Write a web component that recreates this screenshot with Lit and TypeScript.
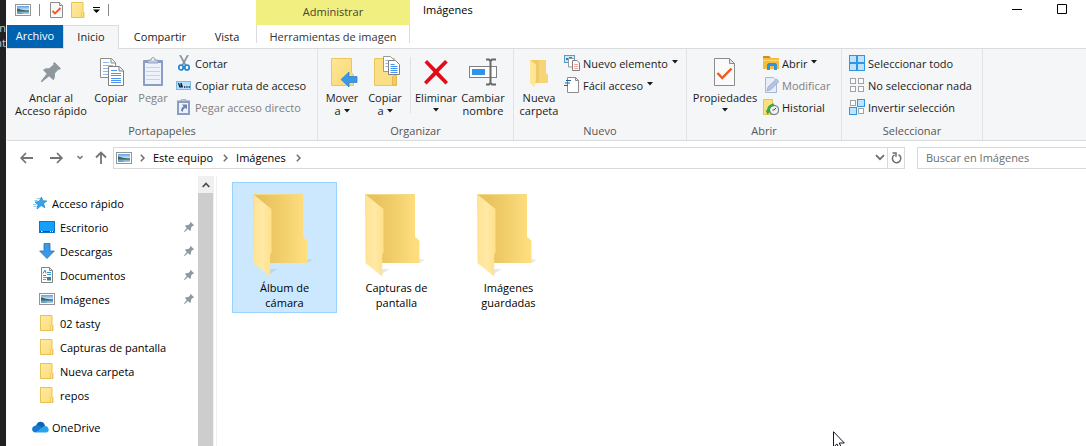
import { LitElement, html, css, svg, nothing, TemplateResult } from "lit";
import { customElement } from "lit/decorators.js";

const caret = html`<svg class="caret" width="6" height="4" viewBox="0 0 6 4"><path d="M0 0h6L3 3.6z" fill="#1b1b1b" /></svg>`;

const pinShape = svg`<path d="M13.500 0L20 6.500l-1.500 1.300-1-.3-3.700 4c.6 2.500.2 4.800-1.500 6.700L8.200 14.200 1 20H0v-1l5.700-7.200L2 8c1.500-1.600 3.800-2.200 6.300-1.700l4.200-3.800-.4-1z" fill="#8d989f"/>`;

const picture = html`<svg width="16" height="12" viewBox="0 0 16 12">
  <defs>
    <linearGradient id="sky" x1="0" y1="0" x2="0" y2="1"><stop offset="0" stop-color="#5f9fe6" /><stop offset="1" stop-color="#eef6fb" /></linearGradient>
  </defs>
  <rect x=".5" y=".5" width="15" height="11" fill="#fff" stroke="#959595" />
  <rect x="2" y="2" width="12" height="5" fill="url(#sky)" />
  <path d="M2 4.500C4 4.500 7 6.500 14 6.300V8H2z" fill="#356a62" />
  <rect x="2" y="7.500" width="12" height="2.500" fill="#6fa3c4" />
  <path d="M6 8.500h8V10H9z" fill="#a5c8de" />
</svg>`;

const smallFolder = html`<svg width="14" height="16" viewBox="0 0 14 16">
  <defs><linearGradient id="sf" x1="0" y1="0" x2="1" y2="1"><stop offset="0" stop-color="#ffeaa3" /><stop offset="1" stop-color="#fcdc78" /></linearGradient></defs>
  <path d="M.5.5h11.500v9l1 1v5H.5z" fill="url(#sf)" stroke="#e9c34f" />
  <path d="M10.500 15.500v-4l1-1.500 1 1v4.500z" fill="#ffe89b" stroke="#e9c34f" stroke-width=".8" />
</svg>`;

const smallPage = html`<svg width="13" height="16" viewBox="0 0 13 16">
  <path d="M.5.5h9l3 3v12H.5z" fill="#fafafa" stroke="#8c8c8c" />
  <path d="M9.500.5v3h3" fill="#e2e2e2" stroke="#8c8c8c" />
  <path d="M2.500 9l2.500 2.500L10.500 6" fill="none" stroke="#f1591f" stroke-width="1.800" />
</svg>`;

const largeIcons: Record<string, TemplateResult> = {
  pin: html`<svg width="32" height="32" viewBox="0 0 32 32"><g transform="translate(6 6)">${pinShape}</g></svg>`,
  copy: html`<svg width="32" height="32" viewBox="0 0 32 32">
    <path d="M5.500 2.500h11l4 4v15h-15z" fill="#fff" stroke="#8c8c8c" />
    <path d="M16 2.500v4.500h4.500" fill="#eee" stroke="#8c8c8c" />
    <path d="M8 6.500h6M8 9.500h10M8 12.500h5M8 15.500h5M8 18.500h5" stroke="#8ab9f3" />
    <path d="M13.500 10.500h11l4 4v15h-15z" fill="#fff" stroke="#808080" />
    <path d="M24 10.500v4.500h4.500" fill="#eee" stroke="#808080" />
    <path d="M16 14.500h6M16 17.500h10M16 19.500h10M16 22.500h10M16 24.500h10M16 26.500h10" stroke="#4a93ee" />
  </svg>`,
  paste: html`<svg width="32" height="32" viewBox="0 0 32 32">
    <rect x="6" y="4" width="20" height="26" rx="1" fill="#8b9dc3" />
    <rect x="8" y="7" width="16" height="21" fill="#eef3fb" />
    <path d="M9 11.500h14M9 15.500h14M9 19.500h14M9 23.500h14" stroke="#c5d2e8" />
    <path d="M11 7V4h3c0-3.400 4-3.400 4 0h3v3z" fill="#c0cbdf" stroke="#8797b7" stroke-width=".8" />
    <circle cx="16" cy="3.500" r="1" fill="#fff" />
  </svg>`,
  move: html`<svg width="32" height="32" viewBox="0 0 32 32">
    <defs><linearGradient id="mf" x1="0" y1="0" x2="1" y2="1"><stop offset="0" stop-color="#ffe799" /><stop offset="1" stop-color="#f8d672" /></linearGradient></defs>
    <path d="M5.500 2.500h20v14l2 2.500v10.500h-22z" fill="url(#mf)" stroke="#eac75d" />
    <path d="M15 23.500l8-7.500v4.500h8v6h-8V31z" fill="#3a98e6" stroke="#2380cf" stroke-width=".7" />
  </svg>`,
  copyTo: html`<svg width="32" height="32" viewBox="0 0 32 32">
    <path d="M5.500 2.500h20v14l2 2.500v10.500h-22z" fill="#fbdf87" stroke="#eac75d" />
    <path d="M23.500 29v-8l2-2 2 2v8z" fill="#f3cd62" stroke="#e2b94a" />
    <path d="M14.500.5h7l3 3v12h-10z" fill="#fff" stroke="#999" />
    <path d="M16.500 4.500h4M16.500 7.500h3M16.500 10.500h3" stroke="#8ab9f3" />
    <path d="M19.500 4.500h7l4 4v10h-11z" fill="#fff" stroke="#808080" />
    <path d="M21.500 8.500h4M21.500 10.500h7M21.500 12.500h7M21.500 14.500h7M21.500 16.500h7" stroke="#4a93ee" />
  </svg>`,
  remove: html`<svg width="32" height="32" viewBox="0 0 32 32"><path d="M4.500 6.500L7 4l9 9 9-9 2.800 2.500-9.300 9.500 9.500 10-2.500 2.500L16 19 6.500 28.500 4 26l9.500-10z" fill="#e30b17" /></svg>`,
  rename: html`<svg width="32" height="32" viewBox="0 0 32 32">
    <rect x="2.500" y="10.500" width="27" height="11" fill="#fff" stroke="#808080" />
    <rect x="5" y="13" width="13" height="6" fill="#2f93ea" />
    <path d="M19 3.500h3l1.500 1.500L25 3.500h4M23.500 4.500v23M19 28.500h3l1.500-1.500 1.500 1.500h4" fill="none" stroke="#686868" stroke-width="2" />
  </svg>`,
  newFolder: html`<svg width="32" height="32" viewBox="0 0 32 32">
    <path d="M7 4h16v13l2 2.500V27H8z" fill="#efca68" /><path d="M16 4h7v13l2 2.500V27h-9z" fill="#f7d577" />
    <path d="M7 4l6 4.500v15L11.500 31 7 27z" fill="#ffe699" />
  </svg>`,
  properties: html`<svg width="32" height="32" viewBox="0 0 32 32"><g transform="translate(5 2)">
    <path d="M.5.5h15l5 5v22H.5z" fill="#fafafa" stroke="#8c8c8c" />
    <path d="M15.500.5v5h5z" fill="#e2e2e2" stroke="#8c8c8c" />
    <path d="M3.500 15l4.700 5L17.500 10.500" fill="none" stroke="#f1591f" stroke-width="2.500" /></g>
  </svg>`,
};

const tileGrid = (on: boolean[]) => html`<svg width="16" height="16" viewBox="0 0 16 16">${on.map((sel, i) => {
  const x = (i % 2) * 8, y = Math.floor(i / 2) * 8;
  return sel
    ? svg`<rect x=${x + 0.5} y=${y + 0.5} width="7" height="7" fill="#bfe3ff" stroke="#2f97e0"/>`
    : svg`<rect x=${x + 1.5} y=${y + 1.5} width="5" height="5" fill="#fff" stroke="#a2a2a2"/>`;
})}</svg>`;

const smallIcons: Record<string, TemplateResult> = {
  cut: html`<svg width="16" height="16" viewBox="0 0 16 16">
    <path d="M4 0l5.500 10M12 0L6.500 10" stroke="#8b95a0" stroke-width="1.700" />
    <ellipse cx="5" cy="12.500" rx="2.200" ry="2.500" fill="none" stroke="#1d86d2" stroke-width="1.700" />
    <ellipse cx="11" cy="12.500" rx="2.200" ry="2.500" fill="none" stroke="#1d86d2" stroke-width="1.700" />
  </svg>`,
  path: html`<svg width="16" height="16" viewBox="0 0 16 16">
    <rect x=".5" y="4.500" width="14" height="8" fill="#b5e0fd" stroke="#80b9df" />
    <path d="M2.500 6l1.500 4.500M5 6l1.500 4.500M5 6v4.500" fill="none" stroke="#123" stroke-width="1.200" />
    <path d="M8 10h1.300M10.300 10h1.300M12.600 10h1.300" stroke="#123" stroke-width="1.300" />
  </svg>`,
  shortcut: html`<svg width="16" height="16" viewBox="0 0 16 16">
    <path d="M1 1.500h13V16H1z" fill="#8b9dc3" /><path d="M3 4h9v10H3z" fill="#eef3fb" />
    <path d="M5 2.500V1l2-1h1l2 1v1.500z" fill="#c0cbdf" stroke="#8797b7" stroke-width=".7" />
    <path d="M6 5.500h5v5L9.300 8.800C7.500 10 7 11 6.800 13L5 11.800C5 9.700 6 8.200 7.600 7.200z" fill="#6e85b3" />
  </svg>`,
  newItem: html`<svg width="16" height="16" viewBox="0 0 16 16">
    <rect x=".5" y=".5" width="10" height="7" fill="#cbeaff" stroke="#4f9fc9" /><path d="M2 3h2v2H2zM5 2h3v2H5z" fill="#377ba8" />
    <path d="M4.500 3.500h5l2 2v6.500h-7z" fill="#fff" stroke="#999" />
    <path d="M8.500 5.500h4.500l2.500 2.500v7.500h-7z" fill="#fff" stroke="#808080" />
    <path d="M10 9.500h4M10 11.500h4M10 13.500h4" stroke="#f2a4a4" />
  </svg>`,
  easy: html`<svg width="16" height="16" viewBox="0 0 16 16">
    <path d="M3.500.5h8l3 3v12h-11z" fill="#fff" stroke="#8c8c8c" /><path d="M11.500.5v3h3" fill="none" stroke="#8c8c8c" />
    <path d="M2 3.500h5M1 6h5M0 8.500h4" stroke="#255f9c" stroke-width="1.200" />
  </svg>`,
  open: html`<svg width="16" height="16" viewBox="0 0 16 16">
    <path d="M0 1h6l2 2h8v11H0z" fill="#f5bd38" /><path d="M0 1h6l2 2H0z" fill="#d68c14" /><path d="M0 5h16v1H0z" fill="#ffd870" />
    <path d="M4 15V9.500L5.500 8h7L14 9.500V15h-3v-4H7v4z" fill="#2c93e3" />
  </svg>`,
  edit: html`<svg width="16" height="16" viewBox="0 0 16 16">
    <path d="M2.500.5h8l3 3v12h-11z" fill="#e8eef8" stroke="#a8b8d5" />
    <path d="M4 14l1-4 8.500-8L16 4.500 8 12.500z" fill="#b6c5df" stroke="#92a5c9" stroke-width=".7" />
  </svg>`,
  history: html`<svg width="16" height="16" viewBox="0 0 16 16">
    <path d="M.5.5h9v6l2 2v7H.5z" fill="#fbe082" stroke="#e9c34f" />
    <circle cx="11" cy="11" r="4.600" fill="#eef1f2" stroke="#777f83" stroke-width="1.200" />
    <path d="M11 11l2-2M11 11H9.500" stroke="#444" />
    <path d="M11 4.500v2.700c-3 0-4.500 2-4.700 4.600L8 12l-3.600 3.400L2.500 11l1.500.5C4 8 6.500 4.800 11 4.500z" fill="#35ad3f" />
  </svg>`,
  all: tileGrid([true, true, true, true]),
  none: tileGrid([false, false, false, false]),
  invert: tileGrid([false, true, true, false]),
};

const navIcons: Record<string, TemplateResult> = {
  desktop: html`<svg width="16" height="12" viewBox="0 0 16 12"><rect x=".5" y=".5" width="15" height="11" fill="#14a0fb" stroke="#1275c0" /><path d="M1 10.500h14" stroke="#0a4d8b" /><path d="M2 10.500h1.500M11 10.500h1M13 10.500h1" stroke="#fff" /></svg>`,
  download: html`<svg width="16" height="16" viewBox="0 0 16 16"><path d="M5 .5h6v7.500h4.300L8 15.500.7 8H5z" fill="#3a98e6" stroke="#2270b8" stroke-width=".8" /></svg>`,
  document: html`<svg width="12" height="16" viewBox="0 0 12 16"><path d="M.5.5h8l3 3v12H.5z" fill="#fff" stroke="#858585" /><path d="M8.500.5v3h3" fill="none" stroke="#858585" /><path d="M2 6.500L4 3l1 3.500M6 5.500h4M2 8.500h3M6 7.500h4" fill="none" stroke="#2b91d3" /><path d="M2 10.500h8M2 12.500h3" stroke="#8d989f" /><path d="M6 10h4v3.500H6z" fill="#3d7c92" /></svg>`,
  picture,
  folder: smallFolder,
  star: html`<svg width="14" height="14" viewBox="0 0 14 14"><path d="M8.500 1l1.300 3.800 4 .1-3.200 2.500 1.200 4.400L8.200 9.500 4 13l1-4.600-3-2.300 4.200-.7z" fill="#36a5ee" stroke="#1b7fc4" stroke-width=".7" /><path d="M4 2.500h3M0 8.500h3.500M.5 10.500h3M1.500 4.500h3" stroke="#6bbcea" stroke-width=".8" /></svg>`,
  cloud: html`<svg width="17" height="12" viewBox="0 0 17 12"><path d="M4 5C5-.5 12-.8 13 5l-4 3-5-3z" fill="#0f63b4" /><path d="M4 4.500c2-1 4 .3 9 4L3 11.500C-1 11-1 5 4 4.500z" fill="#1478d4" /><path d="M3.500 11.600L12 5c5-1 6.500 6 2 6.600z" fill="#29a3ea" /></svg>`,
};

const places: [string, string, boolean][] = [
  ["Escritorio", "desktop", true], ["Descargas", "download", true], ["Documentos", "document", true], ["Imágenes", "picture", true],
  ["02 tasty", "folder", false], ["Capturas de pantalla", "folder", false], ["Nueva carpeta", "folder", false], ["repos", "folder", false],
];

@customElement("app-root")
export class AppRoot extends LitElement {
  static styles = css`
    :host { display: flex; height: 100vh; overflow: hidden; background: #fff; color: #1b1b1b; font: 11px/13px "Open Sans", "Noto Sans", sans-serif; }
    * { box-sizing: border-box; }
    svg { display: block; flex: none; }
    button, input { font: inherit; color: inherit; border: 0; background: none; padding: 0; margin: 0; }
    a { color: inherit; text-decoration: none; }
    .behind { width: 6px; flex: none; overflow: hidden; background: #212121; color: #c8c8c8; padding-top: 20px; line-height: 15px; display: flex; flex-direction: column; align-items: flex-end; }
    .window { flex: 1; min-width: 0; display: flex; flex-direction: column; border-left: 1px solid #fafafa; }
    .top { display: flex; height: 48px; }
    .quick { display: flex; align-items: center; height: 25px; padding: 0 0 6px 8px; }
    .quick button { margin-right: 8px; }
    .rule { width: 1px; height: 12px; background: #8a8a8a; margin-right: 10px; }
    .tabs { display: flex; height: 24px; position: relative; }
    .tab { padding: 0 0 2px; height: 24px; border: 1px solid transparent; border-bottom: 0; }
    .file { background: #0063b1; color: #fff; border: 0; height: 23px; width: 56px; white-space: nowrap; }
    .active { background: #f5f6f7; border-color: #dadbdc; width: 56px; }
    .share { width: 82px; }
    .view { width: 52px; }
    .context { width: 154px; margin-left: 3px; text-align: center; }
    .manage { background: #f1ef7f; height: 25px; line-height: 24px; color: #45452f; }
    .tools { width: 100%; height: 18px; line-height: 24px; border: solid #dadbdc; border-width: 0 1px; color: #333; }
    .title { padding: 3px 13px; flex: 1; color: #000; }
    .caption { display: flex; gap: 35px; padding: 4px 19px 0 0; align-items: flex-start; }
    .ribbon { display: flex; height: 93px; background: #f5f6f7; border: solid #dadbdc; border-width: 1px 0; }
    .group { display: flex; flex-direction: column; justify-content: space-between; padding: 3px 0; border-right: 1px solid #e2e3e4; }
    .g1 { width: 311px; } .g2 { width: 196px; } .g3 { width: 173px; } .g4 { width: 155px; } .g5 { width: 141px; }
    .controls { display: flex; }
    .g1 .controls { padding-left: 3px; }
    .g5 .controls { padding-left: 7px; }
    .label { text-align: center; color: #555; line-height: 13px; }
    .large { display: flex; flex-direction: column; align-items: center; padding-top: 4px; white-space: nowrap; flex: none; }
    .large svg { margin-bottom: 3px; }
    .large .caret, .small .caret { display: inline-block; margin: 0 0 2px 3px; }
    .w38 { width: 38px; } .w46 { width: 46px; } .w48 { width: 48px; } .w50 { width: 50px; } .w76 { width: 76px; } .w82 { width: 82px; }
    .bar { width: 1px; height: 56px; background: #dfe0e1; margin: 5px 2px 0 6px; }
    .stack { display: flex; flex-direction: column; }
    .small { display: flex; align-items: center; gap: 3px; height: 22px; white-space: nowrap; }
    .small .caret { margin: 0 0 2px 1px; }
    .dim { color: #808080; }
    .address { display: flex; align-items: center; height: 35px; padding: 0 0 2px 13px; }
    .nav { display: flex; align-items: center; gap: 12px; margin-right: 6px; }
    .location { flex: 1; display: flex; align-items: center; height: 22px; border: 1px solid #d9d9d9; padding-left: 2px; gap: 8px; color: #000; margin-right: 12px; }
    .crumb { margin-right: 2px; }
    .fill { flex: 1; }
    .refresh { border-left: 1px solid #d9d9d9; height: 20px; width: 17px; display: grid; place-items: center; margin-left: -6px; }
    .search { width: 169px; height: 22px; border: 1px solid #d9d9d9; border-right: 0; padding-left: 8px; border-radius: 0; outline: 0; }
    .search::placeholder { color: #6d6d6d; opacity: 1; }
    .body { flex: 1; min-height: 0; display: flex; color: #000; }
    .tree { width: 191px; padding: 15px 4px 0 24px; flex: none; overflow: hidden; }
    .tree a { display: flex; align-items: center; height: 24px; white-space: nowrap; }
    .tree .icon { width: 24px; display: grid; place-items: center; flex: none; }
    .tree .place { padding-left: 4px; }
    .tree .place .icon { margin-right: 1px; }
    .tree .icon.head { width: 18px; margin-right: 3px; }
    .tree .cloud { margin-top: 8px; }
    .tree .fixed { margin-left: auto; }
    .scroll { width: 16px; background: #f0f0f0; display: flex; flex-direction: column; flex: none; }
    .scroll button { height: 17px; display: grid; place-items: center; }
    .thumb { flex: 1; background: #cdcdcd; margin-right: 1px; }
    .split { width: 1px; background: #f0f0f0; margin: 0 15px 0 2px; flex: none; }
    .files { display: flex; flex-wrap: wrap; align-content: flex-start; gap: 7px; padding-top: 6px; flex: 1; }
    .tile { width: 105px; min-height: 131px; border: 1px solid transparent; padding: 11px 12px 0; display: flex; flex-direction: column; align-items: center; line-height: 15px; }
    .tile svg { margin-bottom: 2px; }
    .chosen { background: #cce8ff; border-color: #99d1ff; }
    .cursor { position: absolute; left: 833px; top: 431px; }
  `;

  private large(width: string, icon: string, lines: string[], drop = false, dim = false) {
    return html`<button class="large ${width} ${dim ? "dim" : ""}">${largeIcons[icon]}
      ${lines.map((line, i) => html`<span>${line}${drop && lines.length > 1 && i === lines.length - 1 ? caret : nothing}</span>`)}
      ${drop && lines.length === 1 ? html`<svg width="6" height="12" viewBox="0 0 6 12"><path d="M0 4h6L3 7.600z" fill="#1b1b1b" /></svg>` : nothing}
    </button>`;
  }

  private small(icon: string, text: string, drop = false, dim = false) {
    return html`<button class="small ${dim ? "dim" : ""}">${smallIcons[icon]}<span>${text}</span>${drop ? caret : nothing}</button>`;
  }

  private chevron() {
    return html`<svg width="5" height="8" viewBox="0 0 5 8"><path d="M.8.8L4 4 .8 7.200" fill="none" stroke="#6e6e6e" stroke-width="1.500" /></svg>`;
  }

  private tile(first: string, second: string, chosen = false) {
    return html`<button class="tile ${chosen ? "chosen" : ""}">
      <svg width="64" height="84" viewBox="4 0 64 84">
        <defs>
          <linearGradient id="back"><stop offset="0.2" stop-color="#e8c25d" /><stop offset="1" stop-color="#ffe081" /></linearGradient>
          <linearGradient id="flap"><stop offset="0" stop-color="#ffe391" /><stop offset=".5" stop-color="#ffe9a6" /><stop offset="1" stop-color="#ffe18b" /></linearGradient>
        </defs>
        <path d="M21 80l6-4 2-1h-8zM58 69l6-3-6-1z" fill="#7f93a8" opacity=".2" />
        <path d="M4.500.5H54v42l4.500 4.500v22H5z" fill="url(#back)" />
        <path d="M4.500.5H54" stroke="#f5da86" />
        <path d="M4.500.5L22.500 15v43l-1.300 3v21.500L4.500 69z" fill="url(#flap)" />
      </svg>
      <span>${first}</span><span>${second}</span>
    </button>`;
  }

  render() {
    return html`
      <div class="behind" aria-hidden="true"><span>en</span><span>nt</span></div>
      <main class="window">
        <header class="top">
          <div>
            <div class="quick">
              <button aria-label="Imágenes">${picture}</button><span class="rule"></span>
              <button aria-label="Propiedades">${smallPage}</button>
              <button aria-label="Nueva carpeta">${smallFolder}</button>
              <button aria-label="Personalizar"><svg width="7" height="6" viewBox="0 0 7 6"><path d="M0 .5h7" stroke="#000" /><path d="M0 2.500h7L3.500 6z" /></svg></button>
              <span class="rule"></span>
            </div>
            <nav class="tabs">
              <button class="tab file">Archivo</button><button class="tab active">Inicio</button>
              <button class="tab share">Compartir</button><button class="tab view">Vista</button>
            </nav>
          </div>
          <div class="context"><div class="manage">Administrar</div><button class="tools">Herramientas de imagen</button></div>
          <div class="title">Imágenes</div>
          <div class="caption">
            <button aria-label="Minimizar"><svg width="10" height="10" viewBox="0 0 10 10"><path d="M0 5.500h10" stroke="#000" /></svg></button>
            <button aria-label="Maximizar"><svg width="10" height="10" viewBox="0 0 10 10"><path d="M.5.5h9v9h-9z" fill="none" stroke="#000" /></svg></button>
          </div>
        </header>
        <section class="ribbon">
          <div class="group g1"><div class="controls">
            ${this.large("w82", "pin", ["Anclar al", "Acceso rápido"])}${this.large("w38", "copy", ["Copiar"])}${this.large("w46", "paste", ["Pegar"], false, true)}
            <div class="stack">${this.small("cut", "Cortar")}${this.small("path", "Copiar ruta de acceso")}${this.small("shortcut", "Pegar acceso directo", false, true)}</div>
          </div><div class="label">Portapapeles</div></div>
          <div class="group g2"><div class="controls">
            ${this.large("w48", "move", ["Mover", "a"], true)}${this.large("w38", "copyTo", ["Copiar", "a"], true)}
            <span class="bar"></span>
            ${this.large("w46", "remove", ["Eliminar"], true)}${this.large("w48", "rename", ["Cambiar", "nombre"])}
          </div><div class="label">Organizar</div></div>
          <div class="group g3"><div class="controls">
            ${this.large("w50", "newFolder", ["Nueva", "carpeta"])}
            <div class="stack">${this.small("newItem", "Nuevo elemento", true)}${this.small("easy", "Fácil acceso", true)}</div>
          </div><div class="label">Nuevo</div></div>
          <div class="group g4"><div class="controls">
            ${this.large("w76", "properties", ["Propiedades"], true)}
            <div class="stack">${this.small("open", "Abrir", true)}${this.small("edit", "Modificar", false, true)}${this.small("history", "Historial")}</div>
          </div><div class="label">Abrir</div></div>
          <div class="group g5"><div class="controls"><div class="stack">
            ${this.small("all", "Seleccionar todo")}${this.small("none", "No seleccionar nada")}${this.small("invert", "Invertir selección")}
          </div></div><div class="label">Seleccionar</div></div>
        </section>
        <div class="address">
          <div class="nav">
            <button aria-label="Atrás"><svg width="13" height="12" viewBox="0 0 13 12"><path d="M13 6H1.500M6 1L1.200 6 6 11" fill="none" stroke="#747474" stroke-width="1.800" /></svg></button>
            <button aria-label="Adelante"><svg width="20" height="12" viewBox="-5 0 20 12"><path d="M0 6h11.500M7 1l4.800 5L7 11" fill="none" stroke="#747474" stroke-width="1.800" /></svg></button>
            <button aria-label="Recientes"><svg width="6" height="5" viewBox="0 0 6 5"><path d="M.5 1L3 3.500 5.500 1" fill="none" stroke="#747474" stroke-width="1.500" /></svg></button>
            <button aria-label="Arriba"><svg width="12" height="13" viewBox="0 0 12 13"><path d="M6 13V1.500M1 6.500l5-5 5 5" fill="none" stroke="#747474" stroke-width="1.800" /></svg></button>
          </div>
          <div class="location">${picture}${this.chevron()}<button class="crumb">Este equipo</button>${this.chevron()}<button class="crumb">Imágenes</button>${this.chevron()}
            <span class="fill"></span>
            <button aria-label="Ubicaciones anteriores"><svg width="10" height="7" viewBox="0 0 10 7"><path d="M1 1.200l4 4 4-4" fill="none" stroke="#6e6e6e" stroke-width="1.800" /></svg></button>
            <button class="refresh" aria-label="Actualizar"><svg width="11" height="12" viewBox="0 0 11 12"><path d="M7.500 2.700a4.200 4.200 0 1 1-4 .1M1.500 1h3.500v3.800" fill="none" stroke="#6e6e6e" stroke-width="1.500" /></svg></button>
          </div>
          <input class="search" type="text" aria-label="Buscar en Imágenes" placeholder="Buscar en Imágenes" />
        </div>
        <div class="body">
          <nav class="tree">
            <a href="#"><span class="icon head">${navIcons.star}</span>Acceso rápido</a>
            ${places.map(([name, icon, fixed]) => html`<a class="place" href="#"><span class="icon">${navIcons[icon]}</span>${name}
              ${fixed ? html`<svg class="fixed" width="10" height="10" viewBox="0 0 20 20">${pinShape}</svg>` : nothing}</a>`)}
            <a class="cloud" href="#"><span class="icon head">${navIcons.cloud}</span>OneDrive</a>
          </nav>
          <div class="scroll"><button aria-label="Desplazar arriba"><svg width="8" height="6" viewBox="0 0 8 6"><path d="M.7 5L4 1.500 7.300 5" fill="none" stroke="#505050" stroke-width="1.800" /></svg></button><div class="thumb"></div></div>
          <div class="split"></div>
          <section class="files">${this.tile("Álbum de", "cámara", true)}${this.tile("Capturas de", "pantalla")}${this.tile("Imágenes", "guardadas")}</section>
        </div>
      </main>
      <svg class="cursor" width="13" height="19" viewBox="0 0 13 19"><path d="M.5.700v15.500l3.500-3.300 2.500 5.600 2.300-1-2.500-5.500h5z" fill="#fff" stroke="#15151f" /></svg>
    `;
  }
}
